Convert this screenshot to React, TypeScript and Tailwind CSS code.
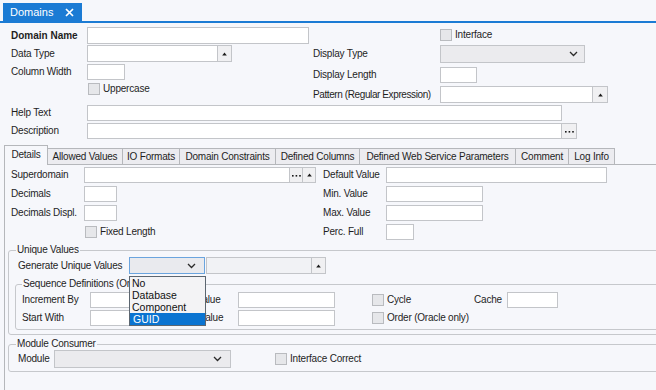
import React from "react"

function Box({ className = "" }: { className?: string }) {
  return <div className={`shrink-0 border border-[#c3c5c9] bg-white ${className}`} />
}

function UpBtn({ className = "" }: { className?: string }) {
  return (
    <div className={`flex shrink-0 items-center justify-center border border-[#c3c5c9] bg-[#f0f0f2] ${className}`}>
      <svg width="5" height="4" viewBox="0 0 5 4">
        <polygon points="2.5,0.5 4.8,3.5 0.2,3.5" fill="#1a1a1a" />
      </svg>
    </div>
  )
}

function DotsBtn({ className = "" }: { className?: string }) {
  return (
    <div className={`flex shrink-0 items-center justify-center border border-[#c3c5c9] bg-[#f0f0f2] ${className}`}>
      <svg width="9" height="3" viewBox="0 0 9 3">
        <rect x="0" y="1" width="1.6" height="1.6" fill="#1a1a1a" />
        <rect x="3.6" y="1" width="1.6" height="1.6" fill="#1a1a1a" />
        <rect x="7.2" y="1" width="1.6" height="1.6" fill="#1a1a1a" />
      </svg>
    </div>
  )
}

function Chevron() {
  return (
    <svg width="9" height="6" viewBox="0 0 9 6">
      <polyline points="1,1 4.5,4.5 8,1" fill="none" stroke="#2a2a2a" strokeWidth="1.3" />
    </svg>
  )
}

function Check({ label }: { label: string }) {
  return (
    <div className="flex h-[12px] items-center">
      <div className="h-[12px] w-[12px] shrink-0 border border-[#b9bbbf] bg-[#e6e7ea]" />
      <span className="ml-[3px]">{label}</span>
    </div>
  )
}

const tabs = [
  { name: "Allowed Values", w: "w-[75px]" },
  { name: "IO Formats", w: "w-[57px]" },
  { name: "Domain Constraints", w: "w-[96px]" },
  { name: "Defined Columns", w: "w-[84px]" },
  { name: "Defined Web Service Parameters", w: "w-[156px]" },
  { name: "Comment", w: "w-[53px]" },
  { name: "Log Info", w: "w-[46px]" },
]

export default function App() {
  return (
    <div className="h-[390px] w-[656px] overflow-hidden whitespace-nowrap bg-[#f6f7fb] font-[family-name:'Liberation_Sans',Arial,sans-serif] text-[10px] leading-[12px] tracking-[-0.2px] text-[#1e1e1e]">
      {/* document tab */}
      <div className="flex h-[23px] items-end border-b-2 border-[#1b7bd4] pl-[3px]">
        <div className="flex h-[18px] w-[79px] items-center bg-[#1b7bd4] pl-[7px] text-[11px] tracking-normal text-white">
          <span>Domains</span>
          <svg className="ml-[12px]" width="9" height="9" viewBox="0 0 9 9">
            <path d="M1 1 L8 8 M8 1 L1 8" stroke="white" strokeWidth="1.7" />
          </svg>
        </div>
      </div>

      {/* header fields */}
      <div className="flex pl-[11px] pt-[4px]">
        <div className="w-[302px]">
          <div className="flex h-[17px] items-center">
            <span className="w-[76px] shrink-0 font-bold tracking-normal">Domain Name</span>
            <Box className="h-[17px] w-[222px]" />
          </div>
          <div className="mt-[1px] flex h-[17px] items-center">
            <span className="w-[76px] shrink-0">Data Type</span>
            <Box className="h-[17px] w-[131px]" />
            <UpBtn className="h-[17px] w-[14px] border-l-0" />
          </div>
          <div className="mt-[2px] flex h-[16px] items-center">
            <span className="w-[76px] shrink-0">Column Width</span>
            <Box className="h-[16px] w-[38px]" />
          </div>
          <div className="ml-[77px] mt-[3px]">
            <Check label="Uppercase" />
          </div>
        </div>
        <div>
          <div className="mt-[2px] pl-[127px]">
            <Check label="Interface" />
          </div>
          <div className="mt-[4px] flex h-[18px] items-center">
            <span className="w-[127px] shrink-0">Display Type</span>
            <div className="flex h-[18px] w-[145px] items-center justify-end border border-[#c3c5c9] bg-[#ebebee] pr-[6px]">
              <Chevron />
            </div>
          </div>
          <div className="mt-[4px] flex h-[16px] items-center">
            <span className="w-[127px] shrink-0">Display Length</span>
            <Box className="h-[16px] w-[37px]" />
          </div>
          <div className="mt-[3px] flex h-[17px] items-center">
            <span className="w-[127px] shrink-0 tracking-[-0.4px]">Pattern (Regular Expression)</span>
            <Box className="h-[17px] w-[153px]" />
            <UpBtn className="h-[17px] w-[15px] border-l-0" />
          </div>
        </div>
      </div>
      <div className="mt-[2px] flex h-[16px] items-center pl-[11px]">
        <span className="w-[76px] shrink-0">Help Text</span>
        <Box className="h-[16px] w-[475px]" />
      </div>
      <div className="mt-[2px] flex h-[16px] items-center pl-[11px]">
        <span className="w-[76px] shrink-0">Description</span>
        <Box className="h-[16px] w-[475px]" />
        <DotsBtn className="h-[16px] w-[15px] border-l-0" />
      </div>

      {/* detail tabs */}
      <div className="mt-[6px] flex h-[20px] items-end pl-[4px]">
        <div className="flex h-[20px] w-[44px] items-center justify-center border border-b-0 border-[#b5b7bb] bg-[#f6f7fb] pb-[1px]">
          Details
        </div>
        {tabs.map((t) => (
          <div
            key={t.name}
            className={`flex h-[17px] items-center justify-center border border-l-0 border-[#b5b7bb] bg-[#ececf0] ${t.w}`}
          >
            {t.name}
          </div>
        ))}
        <div className="h-[1px] flex-1 bg-[#b5b7bb]" />
      </div>

      <div className="ml-[4px] h-[226px] border-l border-[#b5b7bb] pt-[2px]">
        <div className="flex pl-[6px]">
          <div className="w-[312px]">
            <div className="flex h-[16px] items-center">
              <span className="w-[73px] shrink-0">Superdomain</span>
              <Box className="h-[16px] w-[206px]" />
              <DotsBtn className="h-[16px] w-[13px] border-l-0" />
              <UpBtn className="h-[16px] w-[13px] border-l-0" />
            </div>
            <div className="mt-[3px] flex h-[16px] items-center">
              <span className="w-[73px] shrink-0">Decimals</span>
              <Box className="h-[16px] w-[33px]" />
            </div>
            <div className="mt-[3px] flex h-[16px] items-center">
              <span className="w-[73px] shrink-0">Decimals Displ.</span>
              <Box className="h-[16px] w-[33px]" />
            </div>
            <div className="ml-[74px] mt-[5px]">
              <Check label="Fixed Length" />
            </div>
          </div>
          <div>
            <div className="flex h-[16px] items-center">
              <span className="w-[63px] shrink-0">Default Value</span>
              <Box className="h-[16px] w-[221px]" />
            </div>
            <div className="mt-[3px] flex h-[16px] items-center">
              <span className="w-[63px] shrink-0">Min. Value</span>
              <Box className="h-[16px] w-[97px]" />
            </div>
            <div className="mt-[3px] flex h-[16px] items-center">
              <span className="w-[63px] shrink-0">Max. Value</span>
              <Box className="h-[16px] w-[97px]" />
            </div>
            <div className="mt-[3px] flex h-[16px] items-center">
              <span className="w-[63px] shrink-0">Perc. Full</span>
              <Box className="h-[16px] w-[28px]" />
            </div>
          </div>
        </div>

        {/* unique values */}
        <fieldset className="ml-[3px] mt-[4px] w-[660px] rounded-[3px] border border-[#c6c8cc] pb-[4px]">
          <legend className="ml-[7px] px-[1px] leading-[12px]">Unique Values</legend>
          <div className="mt-[1px] flex h-[17px] items-center pl-[9px]">
            <span className="w-[111px] shrink-0">Generate Unique Values</span>
            <div className="relative z-20 h-[17px] w-[76px] shrink-0">
              <div className="flex h-[17px] items-center justify-end border border-[#6aa4de] bg-[#e9eaee] pr-[8px]">
                <Chevron />
              </div>
              <div className="absolute left-0 top-[19px] w-[77px] border border-[#5c6670] bg-[#f3f3f5] text-[10.5px] leading-[12px] tracking-normal text-[#111]">
                <div className="pl-[2px]">No</div>
                <div className="pl-[2px]">Database</div>
                <div className="pl-[2px]">Component</div>
                <div className="bg-[#0a74d1] pl-[3px] text-white">GUID</div>
              </div>
            </div>
            <div className="ml-[1px] h-[17px] w-[106px] shrink-0 border border-[#c3c5c9] bg-[#f1f2f5]" />
            <UpBtn className="h-[17px] w-[14px] border-l-0" />
          </div>

          <fieldset className="ml-[6px] mt-[4px] w-[650px] rounded-[3px] border border-[#c6c8cc] pb-[3px]">
            <legend className="ml-[6px] px-[1px] leading-[12px]">Sequence Definitions (Oracle only)</legend>
            <div className="mt-[2px] flex h-[16px] items-center pl-[6px]">
              <span className="w-[68px] shrink-0">Increment By</span>
              <Box className="h-[16px] w-[80px]" />
              <span className="w-[68px] shrink-0 pl-[6px]">Min. Value</span>
              <Box className="h-[16px] w-[97px]" />
              <div className="ml-[37px] w-[102px] shrink-0">
                <Check label="Cycle" />
              </div>
              <span className="w-[33px] shrink-0">Cache</span>
              <Box className="h-[16px] w-[51px]" />
            </div>
            <div className="mt-[2px] flex h-[16px] items-center pl-[6px]">
              <span className="w-[68px] shrink-0">Start With</span>
              <Box className="h-[16px] w-[80px]" />
              <span className="w-[68px] shrink-0 pl-[6px]">Max. Value</span>
              <Box className="h-[16px] w-[97px]" />
              <div className="ml-[37px] w-[102px] shrink-0">
                <Check label="Order (Oracle only)" />
              </div>
            </div>
          </fieldset>
        </fieldset>

        {/* module consumer */}
        <fieldset className="ml-[3px] mt-[3px] w-[660px] rounded-[3px] border border-[#c6c8cc] pb-[3px]">
          <legend className="ml-[7px] px-[1px] leading-[12px]">Module Consumer</legend>
          <div className="flex h-[18px] items-center pl-[9px]">
            <span className="w-[36px] shrink-0">Module</span>
            <div className="flex h-[18px] w-[177px] shrink-0 items-center justify-end border border-[#c3c5c9] bg-[#ebebee] pr-[8px]">
              <Chevron />
            </div>
            <div className="ml-[44px]">
              <Check label="Interface Correct" />
            </div>
          </div>
        </fieldset>
      </div>
    </div>
  )
}
